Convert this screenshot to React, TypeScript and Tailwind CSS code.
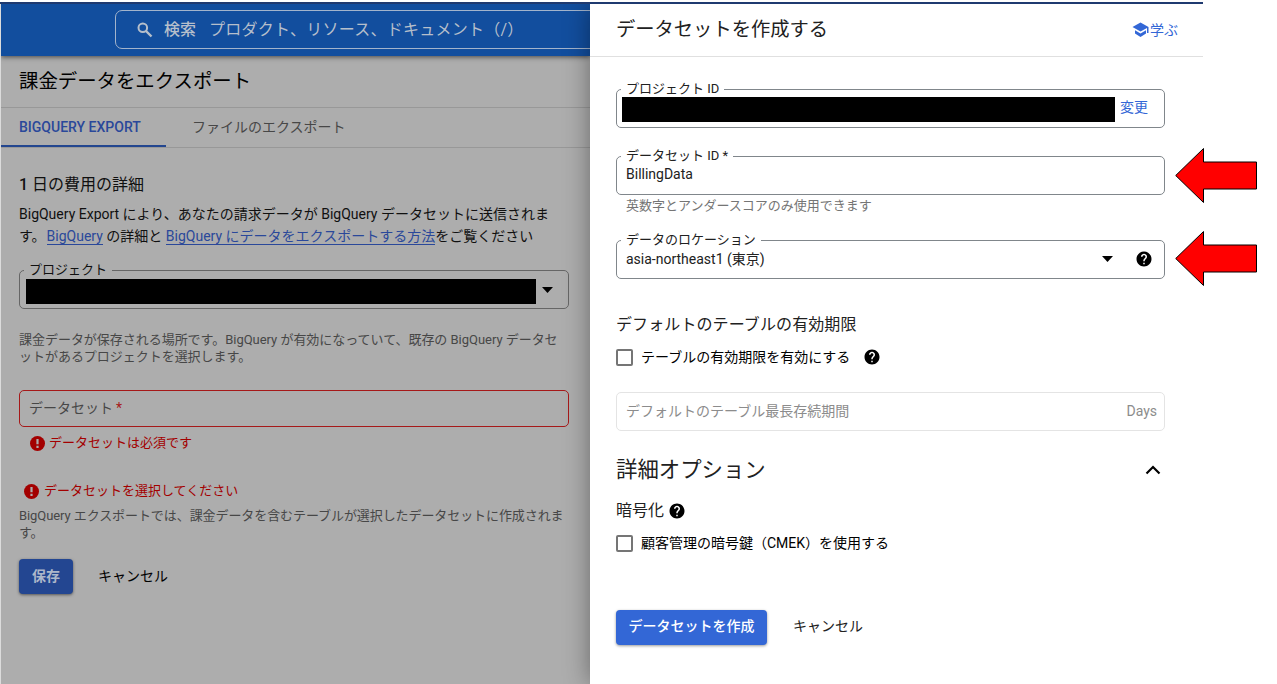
import type { ReactNode } from "react";
import { clsx } from "clsx";
import { MdHelp } from "react-icons/md";

function SearchIcon() {
  return (
    <svg width="20" height="20" viewBox="0 0 20 20" fill="none" className="shrink-0">
      <circle cx="7.800" cy="7.800" r="4.300" stroke="currentColor" strokeWidth="2" />
      <path d="m11 11 5.500 5.500" stroke="currentColor" strokeWidth="2.400" />
    </svg>
  );
}

function CaretDown() {
  return (
    <svg width="11" height="6" viewBox="0 0 11 6" className="shrink-0 text-black">
      <path d="M0 0h11L5.5 6z" fill="currentColor" />
    </svg>
  );
}

function ErrorIcon() {
  return (
    <svg width="15" height="15" viewBox="0 0 15 15" className="shrink-0">
      <circle cx="7.5" cy="7.500" r="7.500" fill="currentColor" />
      <path d="M7.500 3v5.200M7.500 9.800v2.200" stroke="#adadad" strokeWidth="2.200" />
    </svg>
  );
}

function SchoolIcon() {
  return (
    <svg width="17" height="16" viewBox="0 0 17 16" className="shrink-0">
      <path
        d="M8.500.5.5 5l8 4.500L15 5.900V11h1.500V5zM3 8.200v3.300L8.500 15l5.500-3.500V8.200l-5.500 3.200z"
        fill="currentColor"
      />
    </svg>
  );
}

interface OutlinedFieldProps {
  label: string;
  className?: string;
  children: ReactNode;
}

function OutlinedField({ label, className, children }: OutlinedFieldProps) {
  return (
    <fieldset
      className={clsx("h-[46px] rounded-[5px] border", className)}
    >
      <legend className="ml-1 h-[15px] px-[5px] text-[13px] leading-[13px] whitespace-nowrap">
        {label}
      </legend>
      {children}
    </fieldset>
  );
}

function Checkbox({ label }: { label: string }) {
  return (
    <label className="flex h-5 items-center gap-2">
      <span className="h-[17px] w-[17px] rounded-[2px] border-2 border-[#757575]" />
      <span className="text-[14px] leading-5 whitespace-nowrap">{label}</span>
    </label>
  );
}

function ErrorMessage({ text, className }: { text: string; className: string }) {
  return (
    <div className={clsx("flex h-5 items-center text-[#a30000]", className)}>
      <ErrorIcon />
      <span className="whitespace-nowrap">{text}</span>
    </div>
  );
}

function BillingExport() {
  return (
    <div className="flex w-[590px] shrink-0 flex-col overflow-hidden border-l border-[#dcdcdc] bg-[#adadad] text-[#101010]">
      {/* Search bar */}
      <header className="relative flex h-[52px] shrink-0 bg-[#124e9e] pt-1.5 pl-[114px] shadow-[0_1px_5px_rgba(0,0,0,0.6)]">
        <div className="flex h-[39px] w-[560px] shrink-0 items-center rounded-[7px] border border-[#a3b4cc] pl-[19px] text-[16px] text-[#b6bfcb]">
          <SearchIcon />
          <span className="ml-[9px] font-medium">検索</span>
          <span className="ml-[13px] tracking-[0.25px] whitespace-nowrap">
            プロダクト、リソース、ドキュメント（/）
          </span>
        </div>
      </header>

      <h1 className="flex h-[52px] shrink-0 items-center border-b border-[#989898] pt-px pl-[18px] text-[19.4px] text-black">
        課金データをエクスポート
      </h1>

      {/* Tabs */}
      <nav className="flex h-10 shrink-0 border-b border-[#989898] text-[14px]">
        <div className="flex w-[165px] items-center border-b-2 border-[#23468f] pt-0.5 pl-[18px] text-[14px] font-medium text-[#2a489a]">
          BIGQUERY EXPORT
        </div>
        <div className="flex items-center pl-[26px] text-[#474747]">
          ファイルのエクスポート
        </div>
      </nav>

      <main className="flex flex-col pl-[18px]">
        <h2 className="mt-[27px] h-5 text-[16px] leading-5">
          <span className="font-medium">1</span> 日の費用の詳細
        </h2>
        <p className="mt-2 text-[14px] leading-[22px] whitespace-nowrap">
          BigQuery Export により、あなたの請求データが BigQuery データセットに送信されま
          <br />
          す。
          <a className="ml-px border-b border-[#2a489a] text-[#2a489a]">BigQuery</a> の詳細と{" "}
          <a className="border-b border-[#2a489a] text-[#2a489a]">
            BigQuery にデータをエクスポートする方法
          </a>
          をご覧ください
        </p>

        <OutlinedField label="プロジェクト" className="mt-4 w-[550px] border-[#666666]">
          <div className="flex items-start gap-1.5 pt-px pl-1.5">
            <div className="h-[25px] w-[510px] bg-black" />
            <div className="pt-2">
              <CaretDown />
            </div>
          </div>
        </OutlinedField>
        <p className="mt-[22px] text-[13px] leading-[17px] tracking-[-0.03px] whitespace-nowrap text-[#474747]">
          課金データが保存される場所です。BigQuery が有効になっていて、既存の BigQuery データセ
          <br />
          ットがあるプロジェクトを選択します。
        </p>

        <div className="mt-[25px] flex h-[37px] w-[550px] items-center rounded-[5px] border border-[#a61919] pl-[9px] text-[14px] text-[#474747]">
          データセット<span className="ml-[3px] text-[#a61919]">*</span>
        </div>
        <ErrorMessage
          text="データセットは必須です"
          className="mt-1.5 gap-1 pl-[11px] text-[13px]"
        />
        <ErrorMessage
          text="データセットを選択してください"
          className="mt-7 gap-[5px] pl-[5px] text-[13px]"
        />
        <p className="mt-[6px] text-[13px] leading-[17px] tracking-[-0.08px] whitespace-nowrap text-[#474747]">
          BigQuery エクスポートでは、課金データを含むテーブルが選択したデータセットに作成されま
          <br />
          す。
        </p>

        <div className="mt-[18px] flex h-[35px] text-[14px]">
          <button className="w-[54px] rounded-[4px] bg-[#234691] font-bold text-[#adb7ca] shadow-[0_1px_3px_rgba(0,0,0,0.5)]">
            保存
          </button>
          <button className="ml-[25px] text-black">キャンセル</button>
        </div>
      </main>
    </div>
  );
}

function CreateDatasetPanel() {
  return (
    <section className="relative flex w-[613px] shrink-0 flex-col bg-white text-[#212121] shadow-[0_0_24px_rgba(0,0,0,0.4)]">
      <header className="flex h-[53px] shrink-0 items-center justify-between border-b border-[#e0e0e0] pr-[25px] pl-[26px]">
        <h2 className="text-[19.3px]">データセットを作成する</h2>
        <a className="flex items-center gap-px text-[14px] text-[#3367d6]">
          <SchoolIcon />
          学ぶ
        </a>
      </header>

      <div className="flex flex-col pl-[26px] text-[14px]">
        <OutlinedField label="プロジェクト ID" className="mt-[25px] w-[549px] border-[#80868b]">
          <div className="flex items-center pl-[5px]">
            <div className="h-[25px] w-[493px] bg-black" />
            <a className="-mt-1 ml-[5px] text-[#3367d6]">変更</a>
          </div>
        </OutlinedField>

        <OutlinedField label="データセット ID *" className="mt-[21px] w-[549px] border-[#80868b]">
          <div className="pl-[9px] text-[14px] leading-[21px]">BillingData</div>
        </OutlinedField>
        <p className="mt-px h-5 pl-2.5 text-[13px] leading-5 text-[#757575]">
          英数字とアンダースコアのみ使用できます
        </p>

        <OutlinedField label="データのロケーション" className="mt-[17px] w-[549px] border-[#80868b]">
          <div className="flex h-[22px] items-center pr-[11px] pl-[9px] text-[14px]">
            <span className="grow leading-5">asia-northeast1 (東京)</span>
            <CaretDown />
            <MdHelp size={18} className="ml-[22px] text-black" />
          </div>
        </OutlinedField>

        <h3 className="mt-[36px] h-5 text-[16px] leading-5 tracking-[0.1px]">
          デフォルトのテーブルの有効期限
        </h3>
        <div className="mt-3 flex items-center gap-[13px] text-black">
          <Checkbox label="テーブルの有効期限を有効にする" />
          <MdHelp size={18} />
        </div>

        <div className="mt-[25px] flex h-[39px] w-[549px] items-center justify-between rounded-[5px] border border-[#e4e4e4] pr-[7px] pl-[9px] text-[#8c8c8c]">
          <span className="text-[14px]">デフォルトのテーブル最長存続期間</span>
          <span className="text-[14px]">Days</span>
        </div>

        {/* Advanced options */}
        <div className="mt-6 flex h-[30px] w-[545px] items-center justify-between">
          <h3 className="text-[21.4px] leading-[30px]">詳細オプション</h3>
          <svg width="16" height="10" viewBox="0 0 16 10" className="text-black">
            <path d="M1.500 8.500 8 2l6.500 6.500" fill="none" stroke="currentColor" strokeWidth="2.200" />
          </svg>
        </div>
        <div className="mt-4 flex h-5 items-center gap-1 text-[16px] leading-5">
          暗号化
          <MdHelp size={18} className="text-black" />
        </div>
        <div className="mt-3 text-black">
          <Checkbox label="顧客管理の暗号鍵（CMEK）を使用する" />
        </div>

        <div className="mt-[57px] flex h-[35px]">
          <button className="w-[151px] rounded-[4px] bg-[#3367d6] pb-0.5 font-medium text-white shadow-[0_1px_3px_rgba(0,0,0,0.4)]">
            データセットを作成
          </button>
          <button className="ml-[26px] pb-0.5">キャンセル</button>
        </div>
      </div>
    </section>
  );
}

function PointerArrow({ className }: { className: string }) {
  return (
    <svg
      width="82"
      height="56"
      viewBox="0 0 82 56"
      className={clsx("absolute left-[1175px]", className)}
    >
      <path d="M.7 28.500 28.500 1.500v13.500H81.500v27H28.500V55.500z" fill="#f00" stroke="#000" />
    </svg>
  );
}

export default function App() {
  return (
    <div className="relative h-[684px] w-[1277px] overflow-hidden bg-white pt-0.5 font-[Roboto,'Noto_Sans_CJK_JP',sans-serif]">
      <div className="flex h-full w-[1203px] flex-col">
        <div className="h-0.5 shrink-0 bg-[#1f3a70]" />
        <div className="flex grow overflow-hidden">
          <BillingExport />
          <CreateDatasetPanel />
        </div>
      </div>

      {/* Callouts for the fields to fill in */}
      <PointerArrow className="top-[147px]" />
      <PointerArrow className="top-[230px]" />
    </div>
  );
}
